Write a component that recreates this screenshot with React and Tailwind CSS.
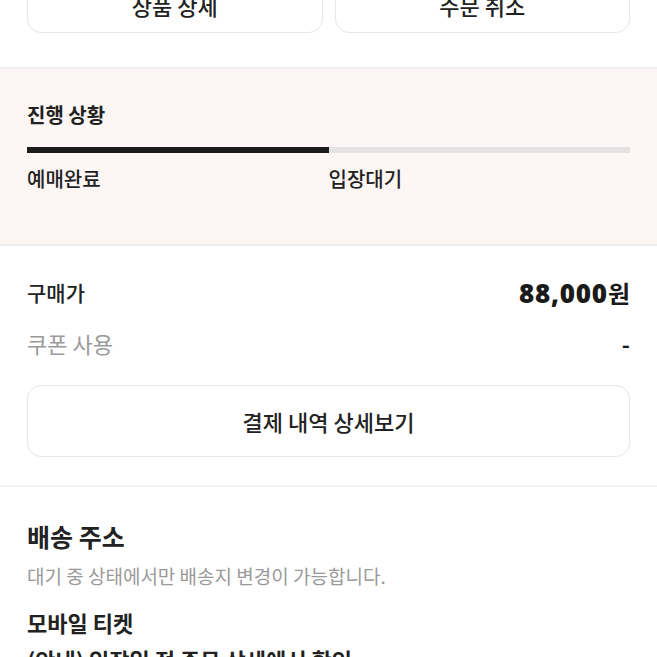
export default function App() {
  const font = { fontFamily: '"Noto Sans CJK KR", "Noto Sans", sans-serif' };

  return (
    <div style={font} className="w-[657px] h-[657px] overflow-hidden bg-white text-[#1a1a1a]">
      {/* 상단 버튼 */}
      <div className="px-[27px] -mt-[22px] flex gap-[12px]">
        <button className="flex-1 h-[55px] rounded-[14px] border border-[#e6e6e6] bg-white text-[22px] font-medium text-[#222]">
          상품 상세
        </button>
        <button className="flex-1 h-[55px] rounded-[14px] border border-[#e6e6e6] bg-white text-[22px] font-medium text-[#222]">
          주문 취소
        </button>
      </div>

      {/* 진행 상황 */}
      <div className="mt-[34px] h-[179px] border-y-2 border-[#efeeee] bg-[#fcf6f5] px-[27px] pt-[32px]">
        <div className="h-[28px] leading-[28px] text-[20px] font-bold text-[#222]">진행 상황</div>
        <div className="mt-[18px] flex h-[6px]">
          <div className="w-1/2 bg-[#1c1c1c]" />
          <div className="w-1/2 bg-[#e4e2e2]" />
        </div>
        <div className="mt-[11px] flex h-[30px] items-center text-[20px] font-medium text-[#222]">
          <span className="w-1/2">예매완료</span>
          <span className="w-1/2">입장대기</span>
        </div>
      </div>

      {/* 결제 */}
      <div className="px-[27px] pt-[32px]">
        <div className="flex h-[30px] items-center justify-between">
          <span className="text-[21px] font-medium text-[#222]">구매가</span>
          <span className="flex items-center text-[24px] font-bold text-[#1a1a1a]">
            <span className="text-[26px] font-extrabold tracking-[0.8px]" style={{ fontFamily: '"Open Sans", sans-serif' }}>
              88,000
            </span>
            원
          </span>
        </div>
        <div className="mt-[20px] flex h-[30px] items-center justify-between">
          <span className="text-[22px] text-[#9a9a9a]">쿠폰 사용</span>
          <span className="text-[22px] font-bold text-[#1a1a1a]">-</span>
        </div>
        <button className="mt-[27px] w-full h-[72px] rounded-[14px] border border-[#e6e6e6] bg-white text-[22px] font-medium text-[#222]">
          결제 내역 상세보기
        </button>
      </div>

      {/* 배송 주소 */}
      <div className="mt-[28px] border-t-2 border-[#f3f3f3] px-[27px] pt-[32px]">
        <div className="h-[34px] leading-[34px] text-[25px] font-bold text-[#222]">배송 주소</div>
        <div className="mt-[9px] h-[28px] leading-[28px] text-[19px] text-[#9a9a9a]">
          대기 중 상태에서만 배송지 변경이 가능합니다.
        </div>
        <div className="mt-[15px] h-[34px] leading-[34px] text-[22px] font-bold text-[#222]">모바일 티켓</div>
        <div className="mt-[4px] h-[32px] leading-[32px] text-[22px] font-bold text-[#222]">
          (안내) 입장일 전 주문 상세에서 확인
        </div>
      </div>
    </div>
  );
}
